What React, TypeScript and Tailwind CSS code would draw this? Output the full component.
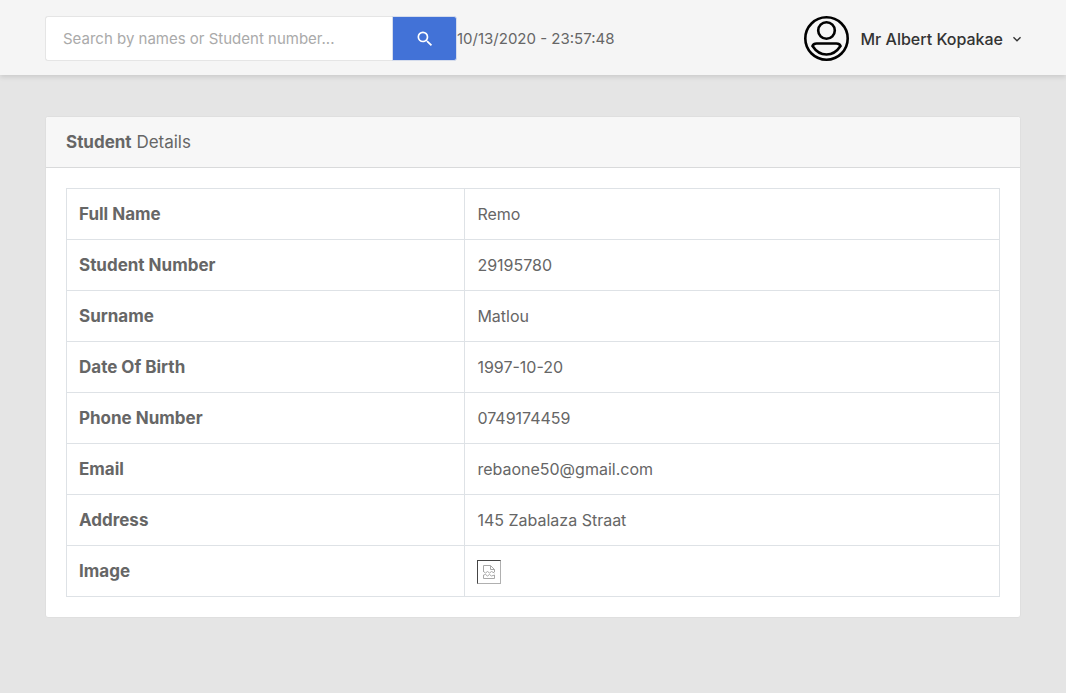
import { MdExpandMore, MdSearch } from "react-icons/md";

const details: [string, string][] = [
  ["Full Name", "Remo"],
  ["Student Number", "29195780"],
  ["Surname", "Matlou"],
  ["Date Of Birth", "1997-10-20"],
  ["Phone Number", "0749174459"],
  ["Email", "rebaone50@gmail.com"],
  ["Address", "145 Zabalaza Straat"],
];

function Avatar() {
  return (
    <svg viewBox="0 0 45 45" className="size-[45px] shrink-0" fill="none" stroke="#000" strokeWidth="2.6" aria-hidden="true">
      <circle cx="22.5" cy="22.5" r="21.2" />
      <circle cx="22.5" cy="14.500" r="8.300" />
      <path d="M12.500 27.500h20q3 0 4 2.500-5.500 8.500-14 8.500T8.500 30q1-2.500 4-2.500z" />
    </svg>
  );
}

function MissingImage() {
  return (
    <span
      role="img"
      aria-label="Student photo"
      className="flex size-6 items-center justify-center border border-t-[#454545] border-r-[#b0b0b0] border-b-[#b0b0b0] border-l-[#454545]"
    >
      <svg viewBox="0 0 12 14" className="h-3.5 w-3" fill="none" stroke="#a8a8a8" aria-hidden="true">
        <path d="M.5 7V.5h7l4 4V7M7.500.5v4h4" />
        <path d="M.5 6.500l2 1.500 2-1.500 2 1.500 2-1.500 3 1.500" />
        <path d="M.5 10v3.500h11V10l-3 1-2-1.500-2 1.500-2-1.500z" />
      </svg>
    </span>
  );
}

export default function App() {
  return (
    <div className="min-h-screen bg-[#e5e5e5] font-['Inter',sans-serif] text-base text-[#666]">
      <header className="flex items-center justify-between bg-[#f5f5f5] px-[45px] pt-4 pb-3.5 shadow-[0_2px_5px_rgba(0,0,0,0.12)]">
        <div className="flex items-center">
          <form className="flex" onSubmit={(e) => e.preventDefault()}>
            <input
              type="text"
              aria-label="Search by names or Student number"
              placeholder="Search by names or Student number..."
              className="h-[45px] w-[347px] rounded-l-[3px] border border-r-0 border-[#e5e5e5] bg-white px-[17px] text-[15px] outline-none placeholder:text-[#aaa]"
            />
            <button
              type="submit"
              aria-label="Search"
              className="flex h-[45px] w-[65px] items-center justify-center rounded-r-[3px] border border-[#d5dcec] bg-[#4272d7] text-white"
            >
              <MdSearch size={20} />
            </button>
          </form>
          <span className="text-[15px] leading-6">10/13/2020 - 23:57:48</span>
        </div>
        <button type="button" className="-mr-1 flex items-center font-medium text-[#333]">
          <Avatar />
          <span className="mr-1.5 ml-3">Mr Albert Kopakae</span>
          <MdExpandMore size={16} />
        </button>
      </header>

      <main className="px-[45px] pt-[41px] pb-10">
        <section className="rounded-[3px] border border-[#dfdfdf] bg-white">
          <h1 className="rounded-t-[3px] border-b border-[#d9dadb] bg-[#f7f7f7] px-5 py-[13px] text-[17px] leading-6 font-normal">
            <strong className="font-bold">Student</strong> Details
          </h1>
          <div className="p-5">
            <table className="w-full table-fixed border-collapse text-left">
              <colgroup>
                <col className="w-[42.700%]" />
                <col />
              </colgroup>
              <tbody>
                {details.map(([label, value]) => (
                  <tr key={label} className="h-[51px]">
                    <th scope="row" className="border border-[#dee2e6] px-3 text-[17px] leading-6 font-bold">{label}</th>
                    <td className="border border-[#dee2e6] px-3">{value}</td>
                  </tr>
                ))}
                <tr className="h-[51px]">
                  <th scope="row" className="border border-[#dee2e6] px-3 text-[17px] leading-6 font-bold">Image</th>
                  <td className="border border-[#dee2e6] px-3 pt-3.5 pb-3">
                    <MissingImage />
                  </td>
                </tr>
              </tbody>
            </table>
          </div>
        </section>
      </main>
    </div>
  );
}
